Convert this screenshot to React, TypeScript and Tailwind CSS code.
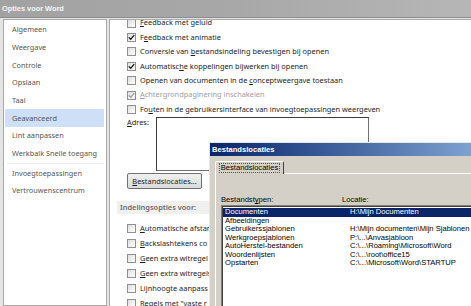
import type { ReactNode } from "react";

const ui = { fontFamily: '"Noto Sans", "Open Sans", sans-serif' };
const classic = { fontFamily: '"Liberation Sans", Arial, sans-serif' };

const navItems = [
  "Algemeen",
  "Weergave",
  "Controle",
  "Opslaan",
  "Taal",
  "Geavanceerd",
  "Lint aanpassen",
  "Werkbalk Snelle toegang",
  "-",
  "Invoegtoepassingen",
  "Vertrouwenscentrum",
];

// label split around the access key: [before, key, after]
type Opt = { parts: [string, string, string]; checked?: boolean; disabled?: boolean };

const editOptions: Opt[] = [
  { parts: ["", "F", "eedback met geluid"] },
  { parts: ["F", "e", "edback met animatie"], checked: true },
  { parts: ["Conversie van ", "b", "estandsindeling bevestigen bij openen"] },
  { parts: ["Automatisc", "h", "e koppelingen bijwerken bij openen"], checked: true },
  { parts: ["Openen van documenten in de ", "c", "onceptweergave toestaan"] },
  { parts: ["", "A", "chtergrondpaginering inschakelen"], checked: true, disabled: true },
  { parts: ["Fo", "u", "ten in de gebruikersinterface van invoegtoepassingen weergeven"] },
];

const layoutOptions: Opt[] = [
  { parts: ["", "A", "utomatische afstand"] },
  { parts: ["", "B", "ackslashtekens co"] },
  { parts: ["", "G", "een extra witregel"] },
  { parts: ["", "G", "een extra witregels"] },
  { parts: ["Li", "j", "nhoogte aanpass"] },
  { parts: ["", "R", "egels met \"vaste r"] },
];

const locations: [string, string][] = [
  ["Documenten", "H:\\Mijn Documenten"],
  ["Afbeeldingen", ""],
  ["Gebruikerssjablonen", "H:\\Mijn documenten\\Mijn Sjablonen"],
  ["Werkgroepsjablonen", "P:\\...\\Anvasjabloon"],
  ["AutoHerstel-bestanden", "C:\\...\\Roaming\\Microsoft\\Word"],
  ["Woordenlijsten", "C:\\...\\root\\office15"],
  ["Opstarten", "C:\\...\\Microsoft\\Word\\STARTUP"],
];

function CheckBox({ checked, disabled }: { checked?: boolean; disabled?: boolean }) {
  return (
    <span className="w-[9px] h-[9px] shrink-0 border border-[#8e8f8f] bg-linear-to-br from-[#dedede] to-white flex items-center justify-center">
      {checked && (
        <svg width="7" height="7" viewBox="0 0 7 7">
          <path
            d="M0.8 3.4 L2.7 5.3 L6.2 1.2"
            stroke={disabled ? "#9a9a9a" : "#111"}
            strokeWidth="1.3"
            fill="none"
          />
        </svg>
      )}
    </span>
  );
}

function Label({ parts }: { parts: [string, string, string] }): ReactNode {
  return (
    <>
      {parts[0]}
      <span className="underline underline-offset-[1px]">{parts[1]}</span>
      {parts[2]}
    </>
  );
}

function OptionRow({ opt, h }: { opt: Opt; h: string }) {
  return (
    <div className={`${h} flex items-center gap-[4px] whitespace-nowrap`}>
      <CheckBox checked={opt.checked} disabled={opt.disabled} />
      <span className={opt.disabled ? "text-[#a0a0a0]" : "text-[#1e1e1e]"}>
        <Label parts={opt.parts} />
      </span>
    </div>
  );
}

function FileLocationsDialog() {
  return (
    <div
      className="absolute left-[209px] top-[142px] w-[262px] h-[164px] overflow-hidden bg-[#d4d0c8] border-l border-t border-[#e8e6e0] text-[7.6px] text-black"
      style={classic}
    >
      <div className="w-[340px] h-[13px] bg-linear-to-r from-[#0a246a] to-[#a6caf0] flex items-center pl-[2px] text-white font-bold">
        Bestandslocaties
      </div>
      <div className="pl-[5px] pt-[5px]">
        <div className="flex items-end">
          <div className="w-[69px] h-[13px] border-l border-t border-white border-r border-r-[#404040] rounded-t-[2px] flex items-center justify-center">
            <span className="px-[1px] leading-[8px] border border-dotted border-[#555]">Bestandslocaties</span>
          </div>
          <div className="flex-1 border-b border-white" />
        </div>
        <div className="border-l border-white h-[140px] pl-[5px] pt-[22px]">
          <div className="flex h-[8px] items-center leading-none">
            <span className="w-[121px]">
              Bestandst<span className="underline">y</span>pen:
            </span>
            <span>Locatie:</span>
          </div>
          <div className="mt-[1px] border-l border-t border-[#808080]">
            <div className="border-l border-t border-[#404040] bg-white h-[120px] pt-[1px]">
              {locations.map(([type, loc], i) => (
                <div
                  key={type}
                  className={`h-[8.5px] flex items-center leading-none whitespace-nowrap ${
                    i === 0 ? "bg-[#0a246a] text-white" : "text-black"
                  }`}
                >
                  <span className="w-[127px] shrink-0 pl-[2px]">{type}</span>
                  <span>{loc}</span>
                </div>
              ))}
            </div>
          </div>
        </div>
      </div>
    </div>
  );
}

export default function App() {
  return (
    <div className="relative w-[471px] h-[306px] overflow-hidden bg-[#e4e4e4] text-[7.4px] leading-none" style={ui}>
      {/* window title */}
      <div className="h-[18px] bg-linear-to-r from-[#a2a2a2] via-[#a8a8a8] to-[#b6b6b6] border-b border-[#8c8c8c] flex items-center pl-[2px]">
        <span className="font-bold text-[#f6f6f6] text-[7.4px]" style={classic}>
          Opties voor Word
        </span>
      </div>

      <div className="flex h-[288px] pt-[1px] pl-[3px]">
        {/* navigation */}
        <div className="w-[104px] bg-white border border-[#a9a9a9] pt-[1px] text-[#555] text-[7.3px]">
          {navItems.map((item, i) =>
            item === "-" ? (
              <div key={i} className="h-[2px] flex items-center mx-[3px]">
                <div className="h-px w-full bg-[#ececec]" />
              </div>
            ) : (
              <div
                key={item}
                className={`h-[17.7px] ml-[1px] mr-[2px] pl-[7px] flex items-center whitespace-nowrap ${
                  item === "Geavanceerd" ? "bg-[#cde0f7]" : ""
                }`}
              >
                {item}
              </div>
            )
          )}
        </div>

        {/* settings pane */}
        <div className="flex-1 ml-[2px] bg-white border-l border-t border-[#a9a9a9] overflow-hidden">
          <div className="mt-[-4px] pl-[17px]">
            {editOptions.map((o, i) => (
              <OptionRow key={i} opt={o} h="h-[14.4px]" />
            ))}
          </div>

          <div className="flex pl-[17px] mt-[0.5px]">
            <span className="w-[29px] pt-[2px] text-[#1e1e1e]">
              <span className="underline">A</span>dres:
            </span>
            <div className="w-[213px] h-[54px] border border-[#6f6f6f] border-t-[#3c3c3c] border-l-[#3c3c3c]" />
          </div>

          <div className="pl-[17px] mt-[2px]">
            <div className="w-[75px] h-[16px] border border-[#707070] rounded-[2px] bg-linear-to-b from-[#f0f0f0] to-[#dadada] flex items-center justify-center text-[#1e1e1e]">
              <span>
                <span className="underline">B</span>estandslocaties...
              </span>
            </div>
          </div>

          <div className="ml-[7px] mt-[12px] h-[13px] bg-[#f0f0f0] flex items-center pl-[3px] font-semibold text-[#6a6a6a]">
            Indelingsopties voor:
          </div>

          <div className="pl-[17px] mt-[6.5px]">
            {layoutOptions.map((o, i) => (
              <OptionRow key={i} opt={o} h="h-[15px]" />
            ))}
          </div>
        </div>
      </div>

      <FileLocationsDialog />
    </div>
  );
}
